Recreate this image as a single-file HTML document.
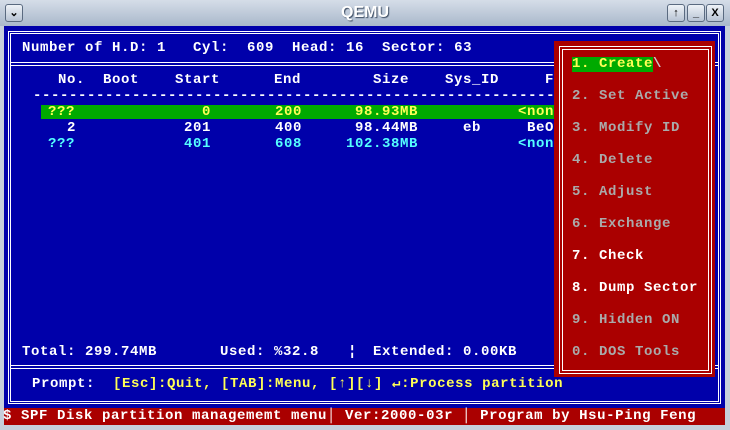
<!DOCTYPE html>
<html><head><style>
*{margin:0;padding:0;box-sizing:border-box}
body{width:730px;height:430px;overflow:hidden;background:#c6cfdb;position:relative;font-family:"Liberation Mono",monospace}
.tb{position:absolute;left:0;top:0;width:730px;height:26px;background:linear-gradient(#d5dde8,#a9b8cb)}
.tt{position:absolute;left:0;width:730px;top:4px;text-align:center;color:#fff;font:bold 16px "Liberation Sans",sans-serif;text-shadow:1px 1px 1px #3a4a60}
.btn{position:absolute;top:4px;width:18px;height:18px;border:1px solid #5a6a80;border-radius:3px;background:linear-gradient(#eef2f7,#b8c4d4);font:bold 11px "Liberation Sans",sans-serif;text-align:center;line-height:16px;color:#000}
.scr{position:absolute;left:4px;top:26px;width:721px;height:399px;background:#0000aa}
.l{position:absolute;background:#fff}
.t{position:absolute;font-size:14px;font-weight:bold;letter-spacing:0.6px;white-space:pre;line-height:14px;color:#fff}
.y{color:#ffff55}.c{color:#55ffff}.g{color:#aaaaaa}
</style></head><body>
<div class="tb"><div class="tt">QEMU</div>
<div class="btn" style="left:5px">&#8964;</div>
<div class="btn" style="left:667px">&#8593;</div>
<div class="btn" style="left:687px">_</div>
<div class="btn" style="left:706px">X</div></div>
<div class="scr"></div>
<div class="l" style="left:8px;top:31px;width:713px;height:1px"></div>
<div class="l" style="left:10px;top:33px;width:709px;height:1px"></div>
<div class="l" style="left:8px;top:31px;width:1px;height:373px"></div>
<div class="l" style="left:10px;top:33px;width:1px;height:369px"></div>
<div class="l" style="left:720px;top:31px;width:1px;height:373px"></div>
<div class="l" style="left:718px;top:33px;width:1px;height:369px"></div>
<div class="l" style="left:8px;top:403px;width:713px;height:1px"></div>
<div class="l" style="left:10px;top:401px;width:709px;height:1px"></div>
<div class="l" style="left:10px;top:62px;width:709px;height:1px"></div>
<div class="l" style="left:10px;top:65px;width:709px;height:1px"></div>
<div class="l" style="left:10px;top:365px;width:709px;height:1px"></div>
<div class="l" style="left:10px;top:368px;width:709px;height:1px"></div>

<div class="t" style="left:22px;top:41px">Number of H.D: 1   Cyl:  609  Head: 16  Sector: 63</div>
<div class="t" style="left:58px;top:73px">No.  Boot</div>
<div class="t" style="left:175px;top:73px">Start</div>
<div class="t" style="left:274px;top:73px">End</div>
<div class="t" style="left:373px;top:73px">Size</div>
<div class="t" style="left:445px;top:73px">Sys_ID</div>
<div class="t" style="left:545px;top:73px">F</div>
<div class="t" style="left:33px;top:89px">----------------------------------------------------------</div>
<div style="position:absolute;left:41px;top:105px;width:514px;height:14px;background:#00aa00"></div>
<div class="t y" style="left:48px;top:105px">???</div>
<div class="t y" style="left:202px;top:105px">0</div>
<div class="t y" style="left:275px;top:105px">200</div>
<div class="t y" style="left:355px;top:105px">98.93MB</div>
<div class="t y" style="left:518px;top:105px">&lt;non</div>
<div class="t" style="left:67px;top:121px">2</div>
<div class="t" style="left:184px;top:121px">201</div>
<div class="t" style="left:275px;top:121px">400</div>
<div class="t" style="left:355px;top:121px">98.44MB</div>
<div class="t" style="left:463px;top:121px">eb</div>
<div class="t" style="left:527px;top:121px">BeO</div>
<div class="t c" style="left:48px;top:137px">???</div>
<div class="t c" style="left:184px;top:137px">401</div>
<div class="t c" style="left:275px;top:137px">608</div>
<div class="t c" style="left:346px;top:137px">102.38MB</div>
<div class="t c" style="left:518px;top:137px">&lt;non</div>
<div class="t" style="left:22px;top:345px">Total: 299.74MB</div>
<div class="t" style="left:220px;top:345px">Used: %32.8</div>
<div class="t" style="left:348px;top:345px">&#166;</div>
<div class="t" style="left:373px;top:345px">Extended: 0.00KB</div>
<div class="t" style="left:32px;top:377px">Prompt:</div>
<div class="t y" style="left:113px;top:377px">[Esc]:Quit, [TAB]:Menu, [&#8593;][&#8595;] &#8629;:Process partition</div>

<div style="position:absolute;left:4px;top:408px;width:721px;height:17px;background:#aa0000"></div>
<div class="t" style="left:3px;top:409px">$ SPF Disk partition managememt menu&#9474; Ver:2000-03r &#9474; Program by Hsu-Ping Feng</div>

<div style="position:absolute;left:554px;top:41px;width:161px;height:336px;background:#aa0000"></div>
<div style="position:absolute;left:559px;top:46px;width:153px;height:328px;border:1px solid #fff"></div>
<div style="position:absolute;left:562px;top:49px;width:147px;height:322px;border:1px solid #fff"></div>
<div style="position:absolute;left:572px;top:57px;width:81px;height:15px;background:#00aa00"></div>
<div class="t y" style="left:572px;top:57px">1. Create<span style="color:#ccc">\</span></div>
<div class="t g" style="left:572px;top:89px">2. Set Active</div>
<div class="t g" style="left:572px;top:121px">3. Modify ID</div>
<div class="t g" style="left:572px;top:153px">4. Delete</div>
<div class="t g" style="left:572px;top:185px">5. Adjust</div>
<div class="t g" style="left:572px;top:217px">6. Exchange</div>
<div class="t" style="left:572px;top:249px">7. Check</div>
<div class="t" style="left:572px;top:281px">8. Dump Sector</div>
<div class="t g" style="left:572px;top:313px">9. Hidden ON</div>
<div class="t g" style="left:572px;top:345px">0. DOS Tools</div>
</body></html>
